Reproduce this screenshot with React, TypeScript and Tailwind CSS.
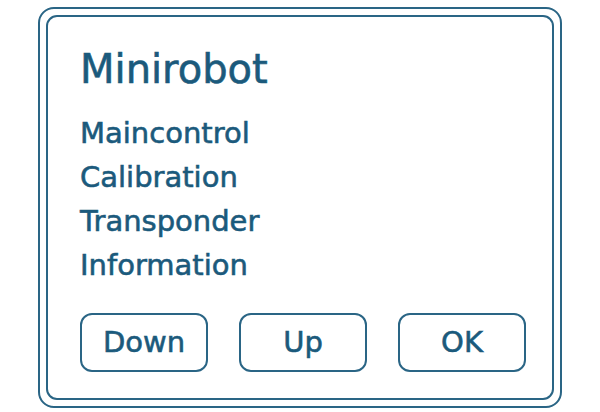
export default function App() {
  const items = ['Maincontrol', 'Calibration', 'Transponder', 'Information'];
  const buttons = ['Down', 'Up', 'OK'];

  return (
    <div className="w-[600px] h-[412px] bg-white pt-[7px] pl-[38px] font-['DejaVu_Sans',sans-serif] text-[#1b5a7c] [-webkit-text-stroke:0.6px_#1b5a7c]">
      <div className="w-[524px] h-[401px] rounded-[16px] border-2 border-[#2a6585] p-[6px]">
        <div className="w-full h-full rounded-[11px] border-2 border-[#2a6585] pl-[32px] pt-[26px]">
          <h1 className="text-[40px] leading-[52px]">Minirobot</h1>
          <ul className="mt-[16px] flex flex-col">
            {items.map((item) => (
              <li key={item} className="text-[29px] leading-[44px]">
                {item}
              </li>
            ))}
          </ul>
          <div className="mt-[26px] flex gap-[31px]">
            {buttons.map((b) => (
              <button
                key={b}
                className="w-[128px] h-[59px] rounded-[12px] border-2 border-[#2a6585] text-[29px]"
              >
                {b}
              </button>
            ))}
          </div>
        </div>
      </div>
    </div>
  );
}
